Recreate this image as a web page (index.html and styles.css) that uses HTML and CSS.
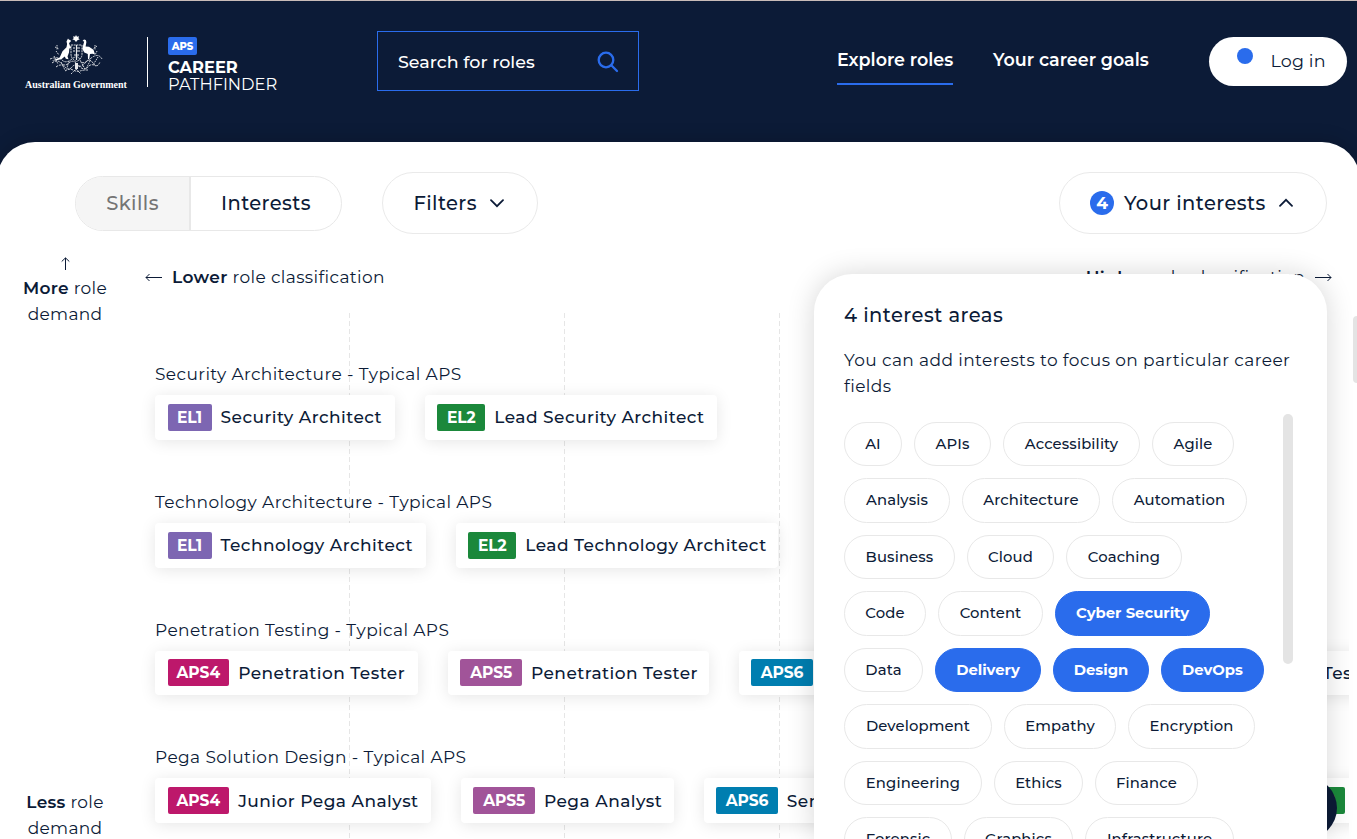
FILE: index.html
```html
<!DOCTYPE html>
<html lang="en">
<head>
<meta charset="utf-8">
<title>APS Career Pathfinder</title>
<link rel="stylesheet" href="styles.css">
</head>
<body>
<header class="header">
  <div class="gov">
    <svg class="crest" width="54" height="40" viewBox="0 0 54 40" fill="#fff">
      <path d="M27 0l1 1.700 2-.4-.6 1.900 1.300 1.300-2 .6L27 7l-1.600-1.900-2-.6 1.300-1.300-.6-1.900 2 .4z"/>
      <path d="M19 3.500l1 1.300 1.500.2.300 1.500-1.800 1.500.8 2.500 1.500 2.500-2 .4-.3 4-1.500 4 1 2.800-2.600-.4-1.200-2.400-3 2.500-5 1.400-5 .2 4-1.200 4-1.700 2.800-6.300 4-4 .6-3.200-.6-2.600z"/>
      <path d="M33.500 6l1.500-1.500 1.800.6.600 2-.8 4.400 3.400.2 4.500 3 1.500 4.800-2.500-.8-2.500.4-.8 4.900h-1.200l-.2-5-3.500-1.400-1.900-3.600.8-4 1-3.500z"/>
      <g fill="none" stroke="#fff" stroke-width=".9" opacity=".9">
        <path d="M22 10h11v9q0 5-5.500 7.500Q22 24 22 19z" stroke-dasharray="2 .7"/>
        <path d="M24 13h2m2 0h3m-7 3h2m2 0h3m-6 4h5M27.500 10v15" stroke-width="1.200"/>
        <path d="M1 24q8-3 12 1t10-1 8 1 10-1 12 0M3 28q5-4 9 0t8 0 8 1 8-1 8 0 7-1M7 32q5-4 9 0t7 0 8 0 8 0 8-1M16 36q4-3 8-1t7 1 8-1" stroke-dasharray="2.200 .9"/>
        <path d="M8 10v5m-2-3l4 2M7 16l3 4M46 10v5m2-4l-4 3M48 16l-2 4M12 27l4 8m4-9l-2 7m14-6l4 7m5-8l-4 8M5 21l4 8m40-7l-5 8M22 39l5-5 5 5" stroke-dasharray="1.500 .8"/>
        <path d="M27.500 28v6" stroke-width="3"/>
      </g>
    </svg>
    <span class="gov-name">Australian Government</span>
  </div>
  <div class="brand">
    <span class="brand-tag">APS</span>
    <strong class="brand-career">CAREER</strong>
    <span class="brand-path">PATHFINDER</span>
  </div>
  <div class="search"><span>Search for roles</span>
    <svg width="22" height="22" viewBox="0 0 22 22" fill="none" stroke="#2a6cec" stroke-width="2.300" stroke-linecap="round"><circle cx="9" cy="9" r="7.300"/><path d="M14.300 14.300L20 20"/></svg>
  </div>
  <nav class="nav">
    <a class="nav-link active">Explore roles</a>
    <a class="nav-link goals">Your career goals</a>
  </nav>
  <div class="login"><i></i><span>Log in</span></div>
</header>
<main class="panel">
  <div class="toolbar">
    <div class="toggle"><span class="toggle-off">Skills</span><span class="toggle-on">Interests</span></div>
    <div class="pill filters"><span>Filters</span>
      <svg width="14" height="9" viewBox="0 0 14 9"><path d="M1 1.200l6 6L13 1.200" fill="none" stroke="#0c1b37" stroke-width="1.800" stroke-linecap="round"/></svg>
    </div>
    <div class="pill yours"><b>4</b><span>Your interests</span>
      <svg width="14" height="9" viewBox="0 0 14 9"><path d="M1 7.800l6-6 6 6" fill="none" stroke="#0c1b37" stroke-width="1.800" stroke-linecap="round"/></svg>
    </div>
  </div>
  <div class="board">
    <aside class="demand">
      <div class="more">
        <svg width="9" height="13" viewBox="0 0 9 13" fill="none" stroke="#0c1b37"><path d="M4.500 13V1M.7 4.500L4.500.9l3.800 3.600"/></svg>
        <p><b>More</b> role<br>demand</p>
      </div>
      <p class="less"><b>Less</b> role<br>demand</p>
    </aside>
    <section class="chart">
      <div class="axis">
        <div class="axis-end"><svg width="17" height="9" viewBox="0 0 17 9" fill="none" stroke="#0c1b37"><path d="M17 4.500H1M4.500 1L1 4.500 4.500 8"/></svg><span><b>Lower</b> role classification</span></div>
        <div class="axis-end"><span><b>Higher</b> role classification</span><svg width="17" height="9" viewBox="0 0 17 9" fill="none" stroke="#0c1b37"><path d="M0 4.500h16M12.500 1L16 4.500 12.500 8"/></svg></div>
      </div>
      <div class="lanes">
        <div class="lane"><h3>Security Architecture - Typical APS</h3>
          <div class="cards">
            <div class="card w240"><span class="lv el1">EL1</span>Security Architect</div>
            <div class="card w292"><span class="lv el2">EL2</span>Lead Security Architect</div>
          </div></div>
        <div class="lane"><h3>Technology Architecture - Typical APS</h3>
          <div class="cards">
            <div class="card w271"><span class="lv el1">EL1</span>Technology Architect</div>
            <div class="card w322"><span class="lv el2">EL2</span>Lead Technology Architect</div>
          </div></div>
        <div class="lane"><h3>Penetration Testing - Typical APS</h3>
          <div class="cards">
            <div class="card w263"><span class="lv aps4">APS4</span>Penetration Tester</div>
            <div class="card w261"><span class="lv aps5">APS5</span>Penetration Tester</div>
            <div class="card w359"><span class="lv aps6">APS6</span>Senior Penetration Tester</div>
            <div class="card w261"><span class="lv aps6">APS6</span>Penetration Tester</div>
          </div></div>
        <div class="lane"><h3>Pega Solution Design - Typical APS</h3>
          <div class="cards">
            <div class="card w276"><span class="lv aps4">APS4</span>Junior Pega Analyst</div>
            <div class="card w213"><span class="lv aps5">APS5</span>Pega Analyst</div>
            <div class="card w276"><span class="lv aps6">APS6</span>Senior Pega Analyst</div>
            <div class="card w245"><span class="lv el1">EL1</span>Lead Pega Analyst</div>
            <div class="card w271"><span class="lv el2">EL2</span></div>
          </div></div>
      </div>
    </section>
  </div>
</main>
<i class="page-thumb"></i>
<i class="help"></i>
<section class="popup">
  <h2>4 interest areas</h2>
  <p>You can add interests to focus on particular career fields</p>
  <div class="list">
    <div class="chips">
      <div><span class="chip w58">AI</span><span class="chip w77">APIs</span><span class="chip w137">Accessibility</span><span class="chip w82">Agile</span></div>
      <div><span class="chip w106">Analysis</span><span class="chip w138">Architecture</span><span class="chip w135">Automation</span></div>
      <div><span class="chip w111">Business</span><span class="chip w87">Cloud</span><span class="chip w116">Coaching</span></div>
      <div><span class="chip w82">Code</span><span class="chip w105">Content</span><span class="chip on w155">Cyber Security</span></div>
      <div><span class="chip w79">Data</span><span class="chip on w106">Delivery</span><span class="chip on w96">Design</span><span class="chip on w103">DevOps</span></div>
      <div><span class="chip w148">Development</span><span class="chip w112">Empathy</span><span class="chip w127">Encryption</span></div>
      <div><span class="chip w138">Engineering</span><span class="chip w89">Ethics</span><span class="chip w103">Finance</span></div>
      <div><span class="chip w108">Forensic</span><span class="chip w109">Graphics</span><span class="chip w149">Infrastructure</span></div>
    </div>
    <i class="thumb"></i>
  </div>
</section>
</body>
</html>
```
FILE: styles.css
```css
* { box-sizing: border-box; }
body {
  margin: 0; width: 1357px; height: 839px; overflow: hidden; position: relative;
  background: #0c1b37; color: #0c1b37;
  font-family: Montserrat, Inter, sans-serif;
}
h2, h3, p { margin: 0; font-weight: 400; }
span, a { white-space: nowrap; }
svg { display: block; flex: none; }

.header { height: 142px; border-top: 1px solid #c9bcb8; display: flex; align-items: flex-start; color: #fff; }
.gov { width: 148px; height: 50px; margin-top: 36px; padding-left: 5px; border-right: 1px solid #fff; display: flex; flex-direction: column; align-items: center; }
.crest { margin: -2px 0 0 0; }
.gov-name { font: bold 10px/14px "Liberation Serif", serif; margin-top: 3px; }
.brand { width: 209px; margin: 36px 0 0 20px; display: flex; flex-direction: column; align-items: flex-start; }
.brand-tag { width: 29px; height: 18px; border-radius: 2px; background: #2a6cec; font-size: 10px; font-weight: 800; line-height: 19px; text-align: center; }
.brand-career { font-size: 16.300px; line-height: 17px; font-weight: 700; margin-top: 4px; }
.brand-path { font-size: 16.300px; line-height: 17px; font-weight: 400; }
.search { width: 262px; height: 60px; margin-top: 30px; border: 1px solid #2a6cec; padding: 1px 19px 0 20px; display: flex; align-items: center; justify-content: space-between; font-size: 17.500px; line-height: 22px; font-weight: 500; }
.nav { display: flex; gap: 40px; margin: 46px 0 0 198px; }
.nav-link { width: 116px; height: 38px; line-height: 26px; font-size: 17.500px; font-weight: 600; }
.nav-link.goals { width: 156px; }
.nav-link.active { border-bottom: 2px solid #2a6cec; }
.login { width: 138px; height: 49px; margin: 36px 0 0 60px; padding-bottom: 2px; border-radius: 25px; background: #fff; color: #0c1b37; display: flex; align-items: center; font-size: 17.500px; letter-spacing: .15px; }
.login i { width: 16px; height: 16px; border-radius: 50%; background: #2a6cec; margin: -9px 17.500px 0 28px; }

.panel { height: 697px; margin: 0 -3px; padding: 0 3px; background: #fff; border-radius: 38px 38px 0 0; box-shadow: 0 -4px 16px rgba(0,0,0,.15); }
.toolbar { height: 92px; padding: 30px 30px 0 75px; display: flex; align-items: center; font-size: 19.500px; font-weight: 500; letter-spacing: .4px; }
.toggle { width: 267px; height: 55px; border: 1px solid #e8e8e8; border-radius: 28px; overflow: hidden; display: flex; line-height: 53px; text-align: center; }
.toggle-off { width: 115px; background: #f5f5f5; color: #757575; border-right: 2px solid #e8e8e8; }
.toggle-on { flex: 1; }
.pill { height: 62px; border: 1px solid #eaeaea; border-radius: 31px; display: flex; align-items: center; }
.filters { width: 156px; margin-left: 40px; padding: 0 33px 0 30.500px; justify-content: space-between; }
.yours { width: 268px; margin-left: auto; padding: 0 33px 0 30px; }
.yours b { width: 24px; height: 24px; border-radius: 50%; background: #2a6cec; color: #fff; font-size: 17px; line-height: 24px; text-align: center; margin-right: 10px; letter-spacing: 0; }
.yours svg { margin: -2px 0 0 auto; }

.board { height: 605px; display: flex; overflow: hidden; }
.demand { width: 130px; padding: 23px 0 0; display: flex; flex-direction: column; font-size: 17px; line-height: 26px; text-align: center; letter-spacing: .3px; }
.more svg { margin: 0 auto 5px; }
.demand b, .axis b { font-weight: 600; }
.less { margin-top: 462px; }
.chart { width: 1219px; overflow: hidden; }
.axis { height: 79px; padding: 30px 17px 0 15px; display: flex; justify-content: space-between; font-size: 17px; letter-spacing: .37px; }
.axis-end { display: flex; gap: 10px; height: 26px; align-items: center; }
.lanes {
  padding: 48px 0 0 25px; height: 526px;
  background: linear-gradient(#e6e6e6 5px, transparent 5px) 219px 0 / 1px 8px repeat-y,
    linear-gradient(#e6e6e6 5px, transparent 5px) 434px 0 / 1px 8px repeat-y,
    linear-gradient(#e6e6e6 5px, transparent 5px) 649px 0 / 1px 8px repeat-y;
}
.lane { height: 127.800px; }
.lane h3 { font-size: 17px; line-height: 26px; height: 34px; letter-spacing: .4px; }
.cards { display: flex; gap: 29.800px; }
.card { flex: none; height: 44.800px; padding: 0 0 0 12.500px; border-radius: 4px; background: #fff; box-shadow: 0 2px 16px rgba(0,0,0,.1); display: flex; align-items: center; gap: 9px; font-size: 17px; line-height: 22px; font-weight: 500; white-space: nowrap; letter-spacing: .46px; }
.lv { height: 27px; border-radius: 2px; color: #fff; font-size: 15.500px; line-height: 27px; font-weight: 700; text-align: center; width: 61.700px; letter-spacing: -.1px; }
.el1 { width: 44px; background: #7d66b2; }
.el2 { width: 48px; background: #1b883b; }
.aps4 { background: #bd186b; }
.aps5 { background: #a15499; }
.aps6 { background: #007eb0; }

.page-thumb { position: absolute; left: 1353px; top: 316px; width: 4px; height: 67px; border-radius: 4px 0 0 4px; background: #e4e4e4; }
.help { position: absolute; left: 1275px; top: 777px; width: 62px; height: 62px; border-radius: 50%; background: #0c1b37; }
/* The list continues below the fold, so the menu is clipped at the window's bottom edge. */
.popup { position: absolute; left: 814px; top: 274px; width: 513px; height: 565px; border-radius: 38px 38px 0 0; overflow: hidden; background: #fff; box-shadow: 0 0 28px rgba(0,0,0,.16); padding: 28px 30px 0; }
.popup h2 { font-size: 19.500px; line-height: 26px; font-weight: 500; letter-spacing: .45px; }
.popup p { font-size: 17px; line-height: 26px; margin-top: 19px; letter-spacing: .4px; }
.list { display: flex; justify-content: space-between; margin-top: 15px; padding-right: 4px; }
.thumb { width: 10px; height: 250px; border-radius: 5px; background: #e4e4e4; }
.chips { padding-top: 7.600px; display: flex; flex-direction: column; gap: 12px; }
.chips div { display: flex; gap: 12px; }
.chip { height: 44.500px; border: 1px solid #e8e8e8; border-radius: 23px; font-size: 14.800px; line-height: 42px; font-weight: 500; text-align: center; letter-spacing: .13px; }
.chip.on { background: #2a6cec; border-color: #2a6cec; color: #fff; font-weight: 700; letter-spacing: 0; }

.w58 { width: 58px; } .w77 { width: 77px; } .w79 { width: 79px; } .w82 { width: 82px; }
.w87 { width: 87px; } .w89 { width: 89px; } .w96 { width: 96px; } .w103 { width: 103px; }
.w105 { width: 105px; } .w106 { width: 106px; } .w108 { width: 108px; } .w109 { width: 109px; }
.w111 { width: 111px; } .w112 { width: 112px; } .w116 { width: 116px; } .w127 { width: 127px; }
.w135 { width: 135px; } .w137 { width: 137px; } .w138 { width: 138px; } .w148 { width: 148px; }
.w149 { width: 149px; } .w155 { width: 155px; }
.w213 { width: 213px; } .w240 { width: 240px; } .w245 { width: 245px; } .w261 { width: 261px; }
.w263 { width: 263px; } .w271 { width: 271px; } .w276 { width: 276px; } .w292 { width: 292px; }
.w322 { width: 322px; } .w359 { width: 359px; }
```
